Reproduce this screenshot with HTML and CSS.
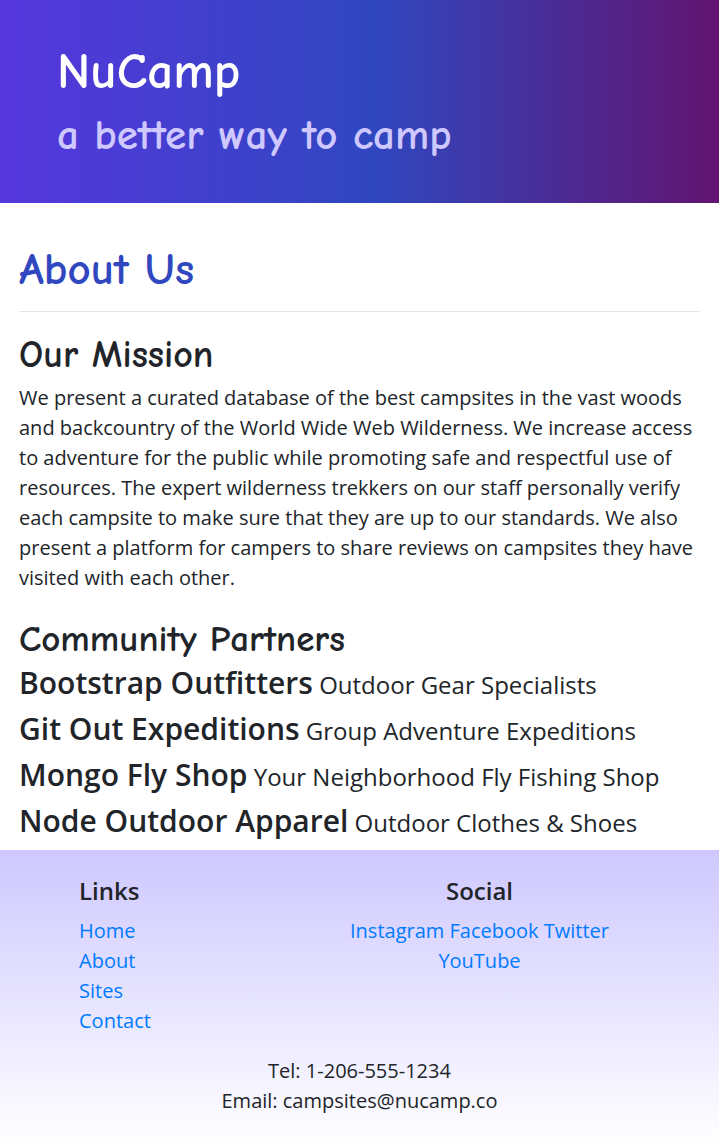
FILE: index.html
```html
<!DOCTYPE html>
<html lang="en">
<head>
<meta charset="utf-8">
<title>NuCamp - About</title>
<link rel="stylesheet" href="styles.css">
</head>
<body>
<header class="hero">
  <h1 class="brand">NuCamp</h1>
  <h2 class="tagline">a better way to camp</h2>
</header>
<main class="content">
  <h2 class="page-title">About Us</h2>
  <hr class="rule">
  <h3 class="section-title">Our Mission</h3>
  <p class="mission">We present a curated database of the best campsites in the vast woods and backcountry of the World Wide Web Wilderness. We increase access to adventure for the public while promoting safe and respectful use of resources. The expert wilderness trekkers on our staff personally verify each campsite to make sure that they are up to our standards. We also present a platform for campers to share reviews on campsites they have visited with each other.</p>
  <h3 class="section-title partners-title">Community Partners</h3>
  <ul class="partners">
    <li><strong>Bootstrap Outfitters</strong> Outdoor Gear Specialists</li>
    <li><strong>Git Out Expeditions</strong> Group Adventure Expeditions</li>
    <li><strong>Mongo Fly Shop</strong> Your Neighborhood Fly Fishing Shop</li>
    <li><strong>Node Outdoor Apparel</strong> Outdoor Clothes &amp; Shoes</li>
  </ul>
</main>
<footer class="site-footer">
  <div class="footer-row">
    <div class="footer-links">
      <h5 class="footer-heading">Links</h5>
      <ul class="link-list">
        <li><a href="#">Home</a></li>
        <li><a href="#">About</a></li>
        <li><a href="#">Sites</a></li>
        <li><a href="#">Contact</a></li>
      </ul>
    </div>
    <div class="footer-social">
      <h5 class="footer-heading">Social</h5>
      <div class="social-list">
        <a href="#">Instagram</a> <a href="#">Facebook</a> <a href="#">Twitter</a> <a href="#">YouTube</a>
      </div>
    </div>
  </div>
  <div class="contact">
    <p>Tel: 1-206-555-1234</p>
    <p>Email: campsites@nucamp.co</p>
  </div>
</footer>
</body>
</html>
```
FILE: styles.css
```css
* { box-sizing: border-box; }
html, body { margin: 0; padding: 0; }
body {
  font-family: "Open Sans", "Noto Sans", sans-serif;
  font-size: 20px;
  line-height: 30px;
  color: #212529;
  background: #fff;
}
.hero {
  height: 203px;
  padding: 40px 57px 0;
  background: linear-gradient(to right, #5637dd 0%, #3047c0 52%, #621470 100%);
}
.brand, .tagline, .page-title, .section-title {
  font-family: "Comic Sans MS", "Comic Neue", cursive;
  font-weight: 700;
  margin: 0;
}
.brand {
  color: #fff;
  font-size: 51px;
  line-height: 64px;
}
.tagline {
  color: #cec8ff;
  font-size: 43px;
  line-height: 56px;
  margin-top: 3px;
}
.content {
  padding: 40px 19px 0;
}
.page-title {
  color: #3047c0;
  font-size: 45px;
  line-height: 52px;
}
.rule {
  border: 0;
  border-top: 1px solid #e5e5e5;
  margin: 16px 0 22px;
}
.section-title {
  font-size: 38px;
  line-height: 42px;
  color: #212529;
}
.partners-title { font-size: 37px; }
.mission {
  margin: 7px 0 25px;
}
.partners {
  list-style: none;
  margin: 2px 0 0;
  padding: 0 0 4px;
  font-size: 24px;
  line-height: 46px;
}
.partners strong {
  font-size: 30px;
  font-weight: 600;
  line-height: 40px;
}
.site-footer {
  background: linear-gradient(#cec8ff, #fff);
  padding: 24px 0 30px;
}
.footer-row {
  display: grid;
  grid-template-columns: 300px 359px 1fr;
}
.footer-links { padding-left: 79px; }
.footer-social { text-align: center; }
.footer-heading {
  margin: 0 0 8px;
  font-size: 24px;
  font-weight: 600;
  line-height: 34px;
}
.link-list {
  list-style: none;
  margin: 0;
  padding: 0;
  font-size: 20px;
}
.social-list { font-size: 20px; padding: 0 30px; }
a { color: #007bff; text-decoration: none; }
.contact {
  text-align: center;
  margin-top: 20px;
  font-size: 20px;
}
.contact p { margin: 0; }
```
